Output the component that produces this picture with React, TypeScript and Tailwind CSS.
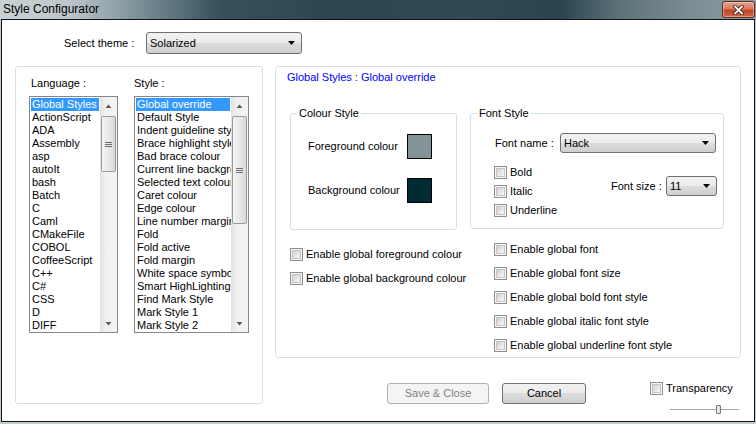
import React from 'react';

const LANGS = [
  'Global Styles',
  'ActionScript',
  'ADA',
  'Assembly',
  'asp',
  'autoIt',
  'bash',
  'Batch',
  'C',
  'Caml',
  'CMakeFile',
  'COBOL',
  'CoffeeScript',
  'C++',
  'C#',
  'CSS',
  'D',
  'DIFF',
];

const STYLES = [
  'Global override',
  'Default Style',
  'Indent guideline style',
  'Brace highlight style',
  'Bad brace colour',
  'Current line background colour',
  'Selected text colour',
  'Caret colour',
  'Edge colour',
  'Line number margin',
  'Fold',
  'Fold active',
  'Fold margin',
  'White space symbol',
  'Smart HighLighting',
  'Find Mark Style',
  'Mark Style 1',
  'Mark Style 2',
];

function Checkbox() {
  return (
    <span className="flex h-[13px] w-[13px] shrink-0 items-center justify-center border border-[#8e8f8f] bg-[#f6f6f6]">
      <span className="h-[9px] w-[9px] border border-[#c4c4c4] bg-[linear-gradient(135deg,#cfcfcf,#e9e9e9_60%,#f7f7f7)]" />
    </span>
  );
}

function CheckItem({ label, className = '' }: { label: string; className?: string }) {
  return (
    <label className={`flex items-center gap-[3px] ${className}`}>
      <Checkbox />
      <span>{label}</span>
    </label>
  );
}

function Arrow() {
  return (
    <svg width="7" height="4" viewBox="0 0 7 4" className="shrink-0">
      <path d="M0 0H7L3.5 4Z" fill="#000" />
    </svg>
  );
}

function Combo({ text, className }: { text: string; className: string }) {
  return (
    <div
      className={`flex items-center justify-between rounded-[3px] border border-[#707070] bg-[linear-gradient(180deg,#f2f2f2_0%,#ebebeb_49%,#dddddd_50%,#cfcfcf_100%)] pl-[3px] pr-[6px] ${className}`}
    >
      <span>{text}</span>
      <Arrow />
    </div>
  );
}

function ScrollArrow({ up }: { up?: boolean }) {
  return (
    <div className="flex h-[17px] items-center justify-center">
      <svg width="7" height="4" viewBox="0 0 7 4">
        <path d={up ? 'M0.5 4L3.5 0.5L6.5 4Z' : 'M0.5 0L3.5 3.5L6.5 0Z'} fill="#5a5a5a" />
      </svg>
    </div>
  );
}

function ScrollBar({ thumbClass }: { thumbClass: string }) {
  return (
    <div className="flex w-[17px] shrink-0 flex-col bg-[linear-gradient(90deg,#e2e2e2,#f1f1f1_35%,#f3f3f3)]">
      <ScrollArrow up />
      <div
        className={`mx-[1px] mt-[2px] flex items-center justify-center rounded-[2px] border border-[#9b9b9b] bg-[linear-gradient(90deg,#f3f3f3,#e9e9e9_50%,#d9d9d9)] ${thumbClass}`}
      >
        <div className="flex flex-col gap-[1px]">
          <span className="h-[1px] w-[7px] bg-[#6e6e6e]" />
          <span className="h-[1px] w-[7px] bg-[#6e6e6e]" />
          <span className="h-[1px] w-[7px] bg-[#6e6e6e]" />
        </div>
      </div>
      <div className="mt-auto">
        <ScrollArrow />
      </div>
    </div>
  );
}

function ListBox({ items, className, thumbClass }: { items: string[]; className: string; thumbClass: string }) {
  return (
    <div className={`flex h-[237px] border border-[#828790] bg-white ${className}`}>
      <div className="min-w-0 flex-1 overflow-hidden p-[1px]">
        {items.map((item, i) => (
          <div
            key={item}
            className={`h-[13px] whitespace-nowrap pl-[1px] leading-[13px] ${i === 0 ? 'bg-[#3399ff] text-white' : ''}`}
          >
            {item}
          </div>
        ))}
      </div>
      <ScrollBar thumbClass={thumbClass} />
    </div>
  );
}

function GroupBox({ title, className, children }: { title: string; className: string; children: React.ReactNode }) {
  return (
    <div className={`relative rounded-[3px] border border-[#d5dfe5] ${className}`}>
      <span className="absolute -top-[7px] left-[6px] bg-white px-[2px] leading-[13px]">{title}</span>
      {children}
    </div>
  );
}

function CloseButton() {
  return (
    <div className="flex h-[17px] w-[33px] items-center justify-center rounded-[3px] border border-[#5e2d22] bg-[linear-gradient(180deg,#eba48f_0%,#d97a60_45%,#c2452a_55%,#d2684a_100%)] shadow-[inset_0_0_0_1px_rgba(255,255,255,0.35)]">
      <svg width="11" height="10" viewBox="0 0 11 10">
        <path d="M2 1.5L9 8.5M9 1.5L2 8.5" stroke="#3b1a12" strokeWidth="3.4" strokeLinecap="square" />
        <path d="M2 1.5L9 8.5M9 1.5L2 8.5" stroke="#fff" strokeWidth="1.8" strokeLinecap="square" />
      </svg>
    </div>
  );
}

export default function App() {
  return (
    <div className="h-[424px] w-[756px] overflow-hidden bg-[#c4cccf] font-['Liberation_Sans',Arial,sans-serif] text-[11px] leading-[13px] text-black">
      <div className="flex h-[19px] items-center justify-between bg-[linear-gradient(90deg,#c9d1d4_0px,#bcc6ca_70px,#71878f_150px,#36515c_220px,#2c4752_330px,#2f4a55_470px,#2a4550_560px,#5e7279_620px,#7c8d93_690px,#8a9ba0_756px)] pl-[3px] pr-[1px]">
        <span className="text-[12px] leading-[15px]">Style Configurator</span>
        <CloseButton />
      </div>

      <div className="ml-[1px] flex h-[403px] w-[754px] flex-col border border-[#141414] bg-white">
        <div className="flex items-center pl-[62px] pt-[12px]">
          <span className="w-[82px]">Select theme :</span>
          <Combo text="Solarized" className="h-[22px] w-[156px]" />
        </div>

        <div className="mt-[12px] flex gap-[12px] pl-[13px]">
          <div className="flex h-[338px] w-[248px] gap-[16px] rounded-[3px] border border-[#d5dfe5] pl-[13px] pt-[10px]">
            <div className="flex flex-col">
              <span className="pl-[2px]">Language :</span>
              <ListBox items={LANGS} className="mt-[6px] w-[89px]" thumbClass="h-[56px]" />
            </div>
            <div className="flex flex-col">
              <span>Style :</span>
              <ListBox items={STYLES} className="mt-[6px] w-[115px]" thumbClass="h-[108px]" />
            </div>
          </div>

          <div className="flex w-[466px] flex-col">
            <div className="h-[292px] rounded-[3px] border border-[#d5dfe5] pl-[11px] pt-[4px]">
              <div className="text-[#0000ff]">Global Styles : Global override</div>

              <div className="ml-[3px] mt-[29px] flex gap-[13px]">
                <GroupBox title="Colour Style" className="h-[117px] w-[167px] pl-[17px] pt-[20px]">
                  <div className="flex items-center">
                    <span className="w-[99px]">Foreground colour</span>
                    <span className="h-[25px] w-[25px] border border-black bg-[#839496]" />
                  </div>
                  <div className="mt-[19px] flex items-center">
                    <span className="w-[99px]">Background colour</span>
                    <span className="h-[25px] w-[25px] border border-black bg-[#002b36]" />
                  </div>
                </GroupBox>

                <GroupBox title="Font Style" className="h-[116px] w-[254px] pl-[23px] pr-[6px] pt-[19px]">
                  <div className="flex items-center">
                    <span className="w-[66px] pl-[1px]">Font name :</span>
                    <Combo text="Hack" className="h-[20px] w-[156px]" />
                  </div>
                  <div className="mt-[10px] flex items-start">
                    <div className="flex flex-col">
                      <CheckItem label="Bold" className="h-[19px]" />
                      <CheckItem label="Italic" className="h-[19px]" />
                      <CheckItem label="Underline" className="h-[19px]" />
                    </div>
                    <div className="ml-auto mt-[13px] flex items-center">
                      <span className="w-[55px]">Font size :</span>
                      <Combo text="11" className="h-[20px] w-[51px]" />
                    </div>
                  </div>
                </GroupBox>
              </div>

              <div className="ml-[3px] mt-[7px] flex">
                <div className="flex w-[204px] flex-col pt-[5px]">
                  <CheckItem label="Enable global foreground colour" className="h-[24px]" />
                  <CheckItem label="Enable global background colour" className="h-[24px]" />
                </div>
                <div className="flex flex-col">
                  <CheckItem label="Enable global font" className="h-[24px]" />
                  <CheckItem label="Enable global font size" className="h-[24px]" />
                  <CheckItem label="Enable global bold font style" className="h-[24px]" />
                  <CheckItem label="Enable global italic font style" className="h-[24px]" />
                  <CheckItem label="Enable global underline font style" className="h-[24px]" />
                </div>
              </div>
            </div>

            <div className="mt-[25px] flex items-start pl-[112px]">
              <button
                type="button"
                disabled
                className="h-[21px] w-[102px] rounded-[3px] border border-[#adb2b5] bg-[#f4f4f4] text-[#838383]"
              >
                Save &amp; Close
              </button>
              <button
                type="button"
                className="ml-[13px] h-[21px] w-[84px] rounded-[3px] border border-[#707070] bg-[linear-gradient(180deg,#f2f2f2_0%,#ebebeb_49%,#dddddd_50%,#cfcfcf_100%)]"
              >
                Cancel
              </button>
              <div className="-mt-[1px] ml-[64px] flex flex-col">
                <CheckItem label="Transparency" />
                <div className="relative ml-[20px] mt-[10px] h-[9px] w-[69px]">
                  <span className="absolute left-0 right-0 top-[4px] h-[2px] border-t border-[#a8a8a8] bg-white" />
                  <span className="absolute left-[46px] top-0 h-[9px] w-[5px] rounded-[1px] border border-[#7a7a7a] bg-[linear-gradient(90deg,#f4f4f4,#d8d8d8)]" />
                </div>
              </div>
            </div>
          </div>
        </div>
      </div>
    </div>
  );
}
